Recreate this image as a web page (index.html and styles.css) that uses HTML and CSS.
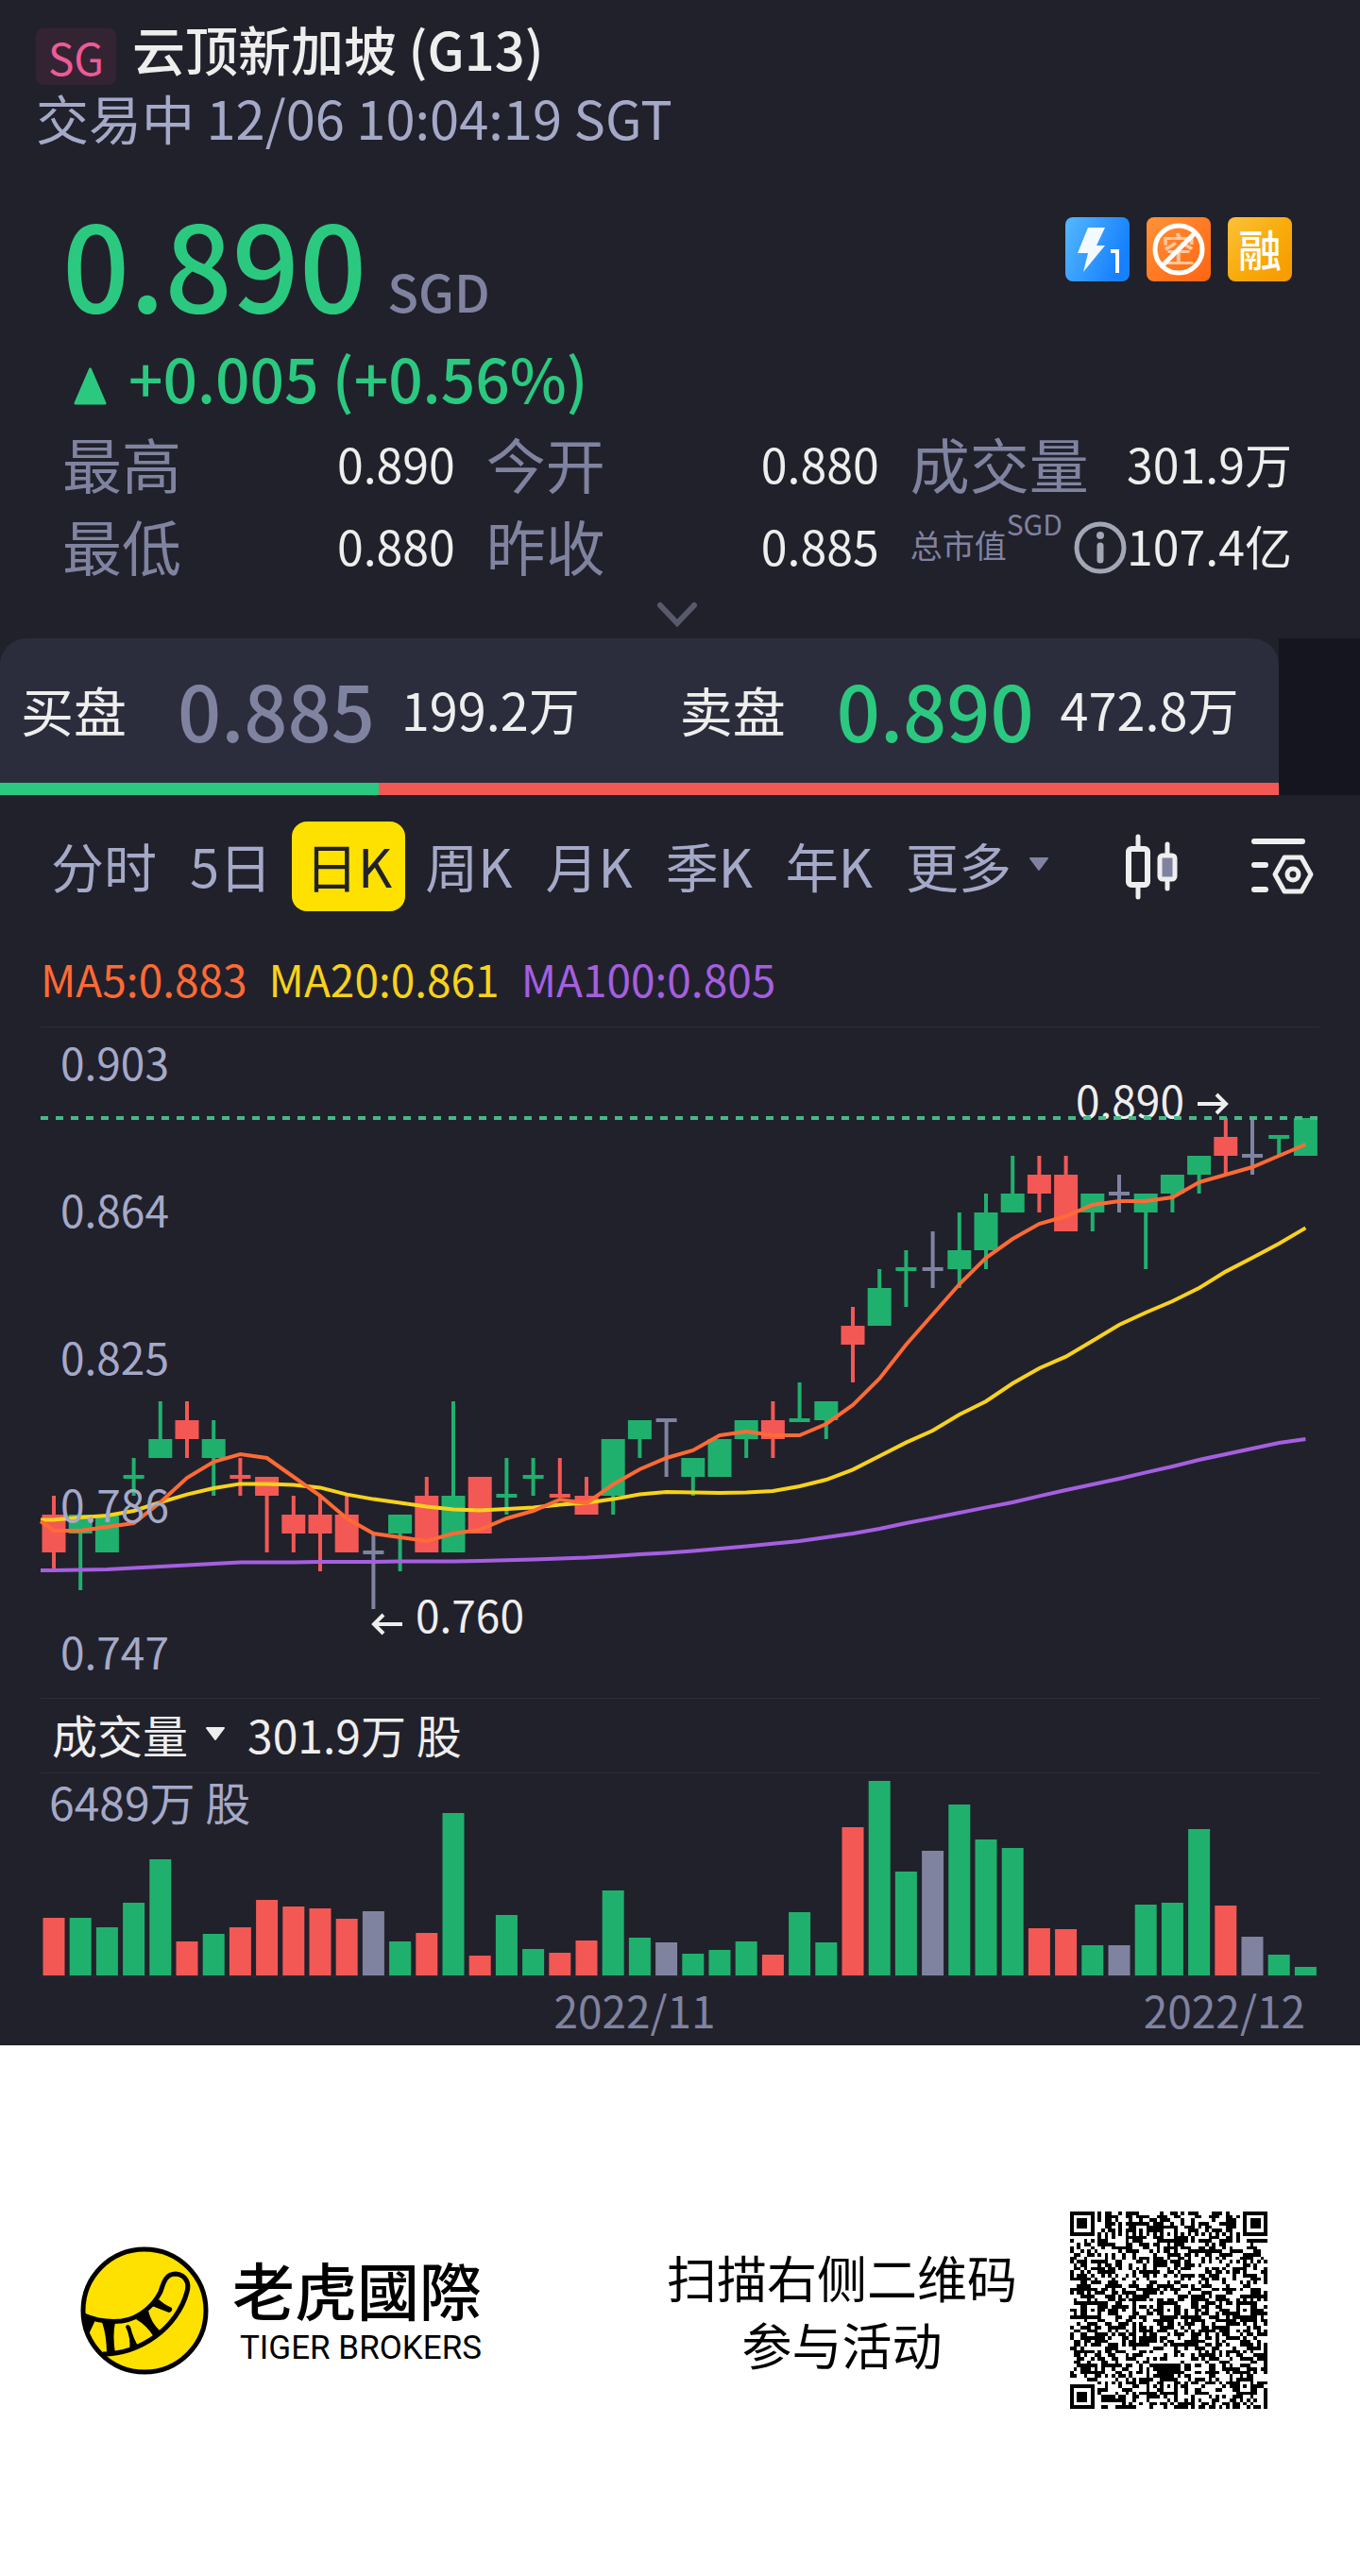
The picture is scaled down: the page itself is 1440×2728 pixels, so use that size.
FILE: index.html
```html
<!DOCTYPE html>
<html lang="zh-CN">
<head>
    <meta charset="UTF-8">
    <meta name="viewport" content="width=device-width, initial-scale=1.0">
    <title>云顶新加坡 (G13)</title>
    <link rel="stylesheet" href="styles.css">
</head>
<body>
    <main class="stock">
        <header class="stock-header">
            <div class="stock-title">
                <span class="market-tag">SG</span>
                <h1>云顶新加坡 (G13)</h1>
            </div>
            <p class="stock-status">交易中 12/06 10:04:19 SGT</p>
        </header>

        <section class="quote">
            <div class="quote-top">
                <div class="quote-price">
                    <span class="price">0.890</span>
                    <span class="currency">SGD</span>
                </div>
                <div class="badges">
                    <svg class="badge" viewBox="0 0 68 68" role="img" aria-label="Level 1">
                        <defs>
                            <linearGradient id="blue" x1="0" y1="0" x2="1" y2="0.4">
                                <stop offset="0" stop-color="#55b8fd"/>
                                <stop offset="1" stop-color="#1680ff"/>
                            </linearGradient>
                        </defs>
                        <rect width="68" height="68" rx="8" fill="url(#blue)"/>
                        <path d="M24 11h18l-9 19h9L19 58l5-20H13z" fill="#f2f9ff"/>
                        <path d="M48 36h7v23" fill="none" stroke="#fff" stroke-width="4"/>
                    </svg>
                    <svg class="badge" viewBox="0 0 68 68" role="img" aria-label="不可卖空">
                        <defs>
                            <linearGradient id="orange" x1="0" y1="0" x2="1" y2="1">
                                <stop offset="0" stop-color="#ff9238"/>
                                <stop offset="1" stop-color="#ff6410"/>
                            </linearGradient>
                        </defs>
                        <rect width="68" height="68" rx="8" fill="url(#orange)"/>
                        <text x="34" y="48" class="badge-faint">空</text>
                        <circle cx="34" cy="34" r="25" fill="none" stroke="#fff" stroke-width="5"/>
                        <path d="M17 51L51 17" stroke="#fff" stroke-width="5"/>
                    </svg>
                    <svg class="badge" viewBox="0 0 68 68" role="img" aria-label="融资">
                        <defs>
                            <linearGradient id="gold" x1="0" y1="0" x2="1" y2="1">
                                <stop offset="0" stop-color="#fcc13c"/>
                                <stop offset="0.5" stop-color="#f9ac0c"/>
                                <stop offset="1" stop-color="#f79800"/>
                            </linearGradient>
                        </defs>
                        <rect width="68" height="68" rx="8" fill="url(#gold)"/>
                        <text x="34" y="52" class="badge-text">融</text>
                    </svg>
                </div>
            </div>
            <p class="change">
                <svg width="35" height="40" viewBox="0 0 35 40" aria-hidden="true">
                    <path d="M17.5 2L33 38H2z" fill="#2bc980" stroke="#2bc980" stroke-width="3" stroke-linejoin="round"/>
                </svg>
                <span>+0.005 (+0.56%)</span>
            </p>

            <dl class="stats">
                <div><dt>最高</dt><dd>0.890</dd></div>
                <div><dt>今开</dt><dd>0.880</dd></div>
                <div><dt>成交量</dt><dd>301.9万</dd></div>
                <div><dt>最低</dt><dd>0.880</dd></div>
                <div><dt>昨收</dt><dd>0.885</dd></div>
                <div>
                    <dt class="cap-label">总市值<sup>SGD</sup></dt>
                    <dd class="cap-value">
                        <svg width="56" height="56" viewBox="0 0 56 56" aria-hidden="true">
                            <circle cx="28" cy="28" r="25" fill="none" stroke="#a3a6b5" stroke-width="5"/>
                            <circle cx="28" cy="15" r="4" fill="#a3a6b5"/>
                            <path d="M28 26v15" stroke="#a3a6b5" stroke-width="7" stroke-linecap="round"/>
                        </svg>
                        <span>107.4亿</span>
                    </dd>
                </div>
            </dl>

            <button class="expand" aria-label="展开">
                <svg width="44" height="28" viewBox="0 0 44 28">
                    <path d="M4 4l18 19L40 4" fill="none" stroke="#585a6c" stroke-width="6" stroke-linecap="round"/>
                </svg>
            </button>
        </section>

        <section class="order-book">
            <div class="order-panel">
                <div class="orders">
                    <div class="order">
                        <span>买盘</span>
                        <span class="order-price flat">0.885</span>
                        <span class="order-size">199.2万</span>
                    </div>
                    <div class="order">
                        <span>卖盘</span>
                        <span class="order-price up">0.890</span>
                        <span class="order-size">472.8万</span>
                    </div>
                </div>
                <div class="ratio">
                    <div class="ratio-bid" style="width: 29.6%"></div>
                </div>
            </div>
        </section>

        <nav class="tabs">
            <button>分时</button>
            <button>5日</button>
            <button class="active">日K</button>
            <button>周K</button>
            <button>月K</button>
            <button>季K</button>
            <button>年K</button>
            <button class="more">更多
                <svg width="22" height="17" viewBox="0 0 22 17" aria-hidden="true">
                    <path d="M2 2h18l-9 12z" fill="#8083a0" stroke="#8083a0" stroke-width="2" stroke-linejoin="round"/>
                </svg>
            </button>
            <div class="tools">
                <button aria-label="K线样式">
                    <svg width="56" height="70" viewBox="0 0 56 70" fill="none" stroke="#eee" stroke-linecap="round">
                        <path d="M13 3v12M13 56v11M44 11v10M44 50v8" stroke-width="5"/>
                        <rect x="3" y="16" width="20" height="38" rx="3" stroke-width="6"/>
                        <rect x="36" y="23" width="16" height="25" rx="3" fill="#8083a0" stroke-width="5"/>
                    </svg>
                </button>
                <button aria-label="指标设置">
                    <svg width="68" height="62" viewBox="0 0 68 62" fill="none" stroke="#eee" stroke-linecap="round" stroke-linejoin="round">
                        <path d="M4 4h51M4 29h12M4 55h12" stroke-width="6"/>
                        <path d="M36 21h18l10 18-10 18H36L26 39z" stroke-width="5"/>
                        <circle cx="45" cy="39" r="6" stroke-width="5"/>
                    </svg>
                </button>
            </div>
        </nav>

        <div class="averages">
            <span class="ma5">MA5:0.883</span>
            <span class="ma20">MA20:0.861</span>
            <span class="ma100">MA100:0.805</span>
        </div>

        <section class="charts">
            <svg id="candles" viewBox="43 0 1354 710"></svg>
            <div class="volume-bar">
                <button class="volume-select">成交量
                    <svg width="22" height="17" viewBox="0 0 22 17" aria-hidden="true">
                        <path d="M2 2h18l-9 12z" fill="#eee" stroke="#eee" stroke-width="2" stroke-linejoin="round"/>
                    </svg>
                </button>
                <span>301.9万 股</span>
            </div>
            <svg id="volume" viewBox="43 0 1354 288"></svg>
        </section>
    </main>

    <footer class="share">
        <div class="brand">
            <svg width="136" height="136" viewBox="0 0 136 136" role="img" aria-label="老虎國際">
                <circle cx="68" cy="68" r="65" fill="#ffe100" stroke="#000" stroke-width="5"/>
                <path d="M4 73C20 80 33 80 44 79C65 76 79 60 85 48C88 39 90 29 101 29C111 30 116 38 113 48C108 67 95 84 80 95C62 108 42 114 24 114" fill="none" stroke="#000" stroke-width="5"/>
                <path d="M4 72l12 6-8 17-4-8zM23 80h14q-3 15 0 33H28q0-18-5-33zM48 85q2-4 5 0 3 12 9 22l-10 4q2-14-4-26zM59 77l13-9q3 13 13 22l-7 6q-7-12-19-19zM76 63l7-7q5 5 14 9 1 4-3 5-8-3-18-7z" fill="#000"/>
            </svg>
            <div class="brand-name">
                <strong>老虎國際</strong>
                <span>TIGER BROKERS</span>
            </div>
        </div>
        <div class="invite">
            <p>扫描右侧二维码<br>参与活动</p>
            <svg id="qr" width="209" height="209" viewBox="0 0 57 57" role="img" aria-label="二维码"></svg>
        </div>
    </footer>

    <script src="chart.js"></script>
</body>
</html>
```
FILE: styles.css
```css
* {
    box-sizing: border-box;
}

body {
    margin: 0;
    background: #fff;
    color: #eee;
    font-family: "Noto Sans CJK SC", "Noto Sans", sans-serif;
}

h1, p, dl, dd {
    margin: 0;
}

h1 {
    font-weight: 500;
}

button {
    padding: 0;
    border: none;
    background: none;
    color: inherit;
    font: inherit;
    cursor: pointer;
}

svg {
    display: block;
    overflow: visible;
}

.stock {
    background: #21212b;
}

/* Header */
.stock-header {
    padding: 18px 38px 0;
}

.stock-title {
    display: flex;
    align-items: flex-end;
    gap: 17px;
}

.stock-title h1 {
    padding-bottom: 6px;
    font-size: 56px;
    line-height: 66px;
}

.market-tag {
    width: 85px;
    border-radius: 8px;
    background: #342433;
    color: #ee5b97;
    font-size: 46px;
    line-height: 60px;
    text-align: center;
}

.stock-status {
    color: #a5a9c8;
    font-size: 56px;
    line-height: 68px;
}

/* Quote */
.quote {
    padding: 59px 72px 0 66px;
}

.quote-top {
    display: flex;
    justify-content: space-between;
}

.quote-price {
    display: flex;
    align-items: baseline;
    gap: 22px;
    font-weight: 500;
}

.price {
    color: #2bc980;
    font-size: 125px;
    line-height: 120px;
}

.currency {
    color: #8083a0;
    font-size: 54px;
    line-height: 54px;
}

.badges {
    display: flex;
    gap: 18px;
    padding-top: 13px;
}

.badge {
    width: 68px;
    height: 68px;
}

.badge-text, .badge-faint {
    fill: #fff;
    font-size: 46px;
    font-weight: 500;
    text-anchor: middle;
}

.badge-faint {
    fill: #ffc79c;
    font-size: 36px;
}

.change {
    display: flex;
    align-items: center;
    gap: 23px;
    margin-top: 22px;
    padding-left: 12px;
    color: #2bc980;
    font-size: 64px;
    font-weight: 500;
    line-height: 80px;
}

.change svg {
    margin-top: 20px;
}

.stats {
    display: grid;
    grid-template-columns: 36fr 36fr 35fr;
    column-gap: 33px;
    margin-top: 7px;
}

.stats > div {
    display: flex;
    justify-content: space-between;
    align-items: center;
    height: 87px;
    white-space: nowrap;
}

.stats dt {
    color: #8083a0;
    font-size: 63px;
}

.stats dd {
    font-size: 50px;
}

.stats .cap-label {
    display: flex;
    align-items: center;
    font-size: 34px;
}

.cap-label sup {
    align-self: flex-start;
    margin-top: -20px;
    font-size: 30px;
}

.stats .cap-value {
    display: flex;
    align-items: center;
}

.cap-value svg {
    margin-top: 6px;
}

.expand {
    display: block;
    height: 56px;
    margin: 0 auto;
    padding-top: 6px;
}

/* Order book */
.order-book {
    padding-right: 6%;
    background: linear-gradient(to right, #21212b 94%, #14151f 94%);
}

.order-panel {
    overflow: hidden;
    border-radius: 28px 28px 0 0;
    background: #2c2d3c;
}

.orders {
    display: flex;
    align-items: center;
    gap: 106px;
    height: 153px;
    padding: 0 22px 4px;
}

.order {
    display: flex;
    align-items: center;
    font-size: 56px;
    white-space: nowrap;
}

.order-price {
    margin: 0 28px 0 54px;
    font-size: 81px;
    font-weight: 500;
    line-height: 100px;
}

.order-size {
    font-size: 54px;
}

.up {
    color: #2bc980;
}

.flat {
    color: #8083a0;
}

.ratio {
    height: 13px;
    background: #f35855;
}

.ratio-bid {
    height: 100%;
    background: #2bc980;
}

/* Tabs */
.tabs {
    display: flex;
    align-items: center;
    gap: 35px;
    padding: 28px 48px 0 54px;
    color: #a5a9c8;
    font-size: 56px;
    white-space: nowrap;
}

.tabs > button {
    padding-bottom: 4px;
    line-height: 91px;
}

.tabs .active {
    margin: 0 -14px;
    padding: 0 14px 4px;
    border-radius: 16px;
    background: #ffe100;
    color: #21212b;
}

.more, .volume-select {
    display: flex;
    align-items: center;
    gap: 18px;
}

.tools {
    display: flex;
    align-items: center;
    gap: 76px;
    margin-left: auto;
}

/* Moving averages */
.averages {
    display: flex;
    gap: 23px;
    padding: 41px 43px 21px;
    font-size: 46px;
    line-height: 60px;
}

.ma5 {
    color: #ff6a35;
}

.ma20 {
    color: #f8d21c;
}

.ma100 {
    color: #a55fe0;
}

/* Charts */
.charts {
    margin: 0 43px;
}

.charts > svg {
    width: 100%;
    border-top: 1px solid #2d2e3a;
}

.volume-bar {
    display: flex;
    align-items: center;
    gap: 23px;
    height: 79px;
    padding: 0 12px 4px;
    border-top: 1px solid #2d2e3a;
    font-size: 48px;
}

.charts text {
    font-size: 46px;
}

.charts .volume-max {
    font-size: 48px;
}

.axis {
    fill: #a5a9c8;
}

.note {
    fill: #eee;
}

.date {
    fill: #8083a0;
}

.arrow {
    fill: none;
    stroke: #eee;
    stroke-width: 4;
}

.last-price {
    stroke: #45b987;
    stroke-width: 4;
    stroke-dasharray: 8 8;
}

.line {
    fill: none;
    stroke-width: 4;
}

.base {
    stroke: #2d2e3a;
}

/* Footer */
.share {
    display: flex;
    justify-content: space-between;
    align-items: center;
    padding: 176px 98px 177px 85px;
    color: #000;
}

.brand {
    display: flex;
    align-items: center;
    gap: 25px;
}

.brand-name {
    display: flex;
    flex-direction: column;
    align-items: flex-end;
}

.brand-name strong {
    font-family: "Noto Sans CJK TC", sans-serif;
    font-size: 66px;
    font-weight: 500;
    line-height: 80px;
}

.brand-name span {
    font-family: Roboto, sans-serif;
    font-size: 35px;
    line-height: 48px;
}

.invite {
    display: flex;
    align-items: center;
    gap: 56px;
}

.invite p {
    font-size: 53px;
    line-height: 71px;
    text-align: center;
}
```
FILE: chart.js
```js
const GREEN = '#20b06e';
const RED = '#f35855';
const GREY = '#8083a0';
const FIRST_X = 57;
const STEP_X = 28.2;

// [color, body top, body bottom, high, low, volume]
// prices are counted in ticks of 0.005 below 0.890
const days = [
    [RED, 21, 23, 20, 24, 61], [GREEN, 21, 22, 21, 25, 61], [GREEN, 21, 23, 21, 23, 51],
    [GREEN, 19, 19, 18, 20, 77], [GREEN, 17, 18, 15, 18, 123], [RED, 16, 17, 15, 18, 36],
    [GREEN, 17, 18, 16, 20, 44], [RED, 19, 19, 18, 20, 51], [RED, 19, 20, 19, 23, 80],
    [RED, 21, 22, 20, 23, 73], [RED, 21, 22, 20, 24, 71], [RED, 21, 23, 20, 23, 60],
    [GREY, 23, 23, 22, 26, 68], [GREEN, 21, 22, 21, 24, 36], [RED, 20, 23, 19, 23, 45],
    [GREEN, 20, 23, 15, 23, 172], [RED, 19, 22, 19, 22, 21], [GREEN, 20, 20, 18, 21, 64],
    [GREEN, 19, 19, 18, 20, 28], [RED, 20, 20, 18, 20, 24], [RED, 20, 21, 19, 21, 37],
    [GREEN, 17, 20, 17, 21, 90], [GREEN, 16, 17, 16, 18, 40], [GREY, 16, 16, 16, 19, 35],
    [GREEN, 18, 19, 18, 20, 23], [GREEN, 17, 19, 17, 19, 27], [GREEN, 16, 17, 16, 18, 36],
    [RED, 16, 17, 15, 18, 22], [GREEN, 16, 16, 14, 16, 67], [GREEN, 15, 16, 15, 17, 35],
    [RED, 11, 12, 10, 14, 157], [GREEN, 9, 11, 8, 11, 206], [GREEN, 8, 8, 7, 10, 110],
    [GREY, 8, 8, 6, 9, 132], [GREEN, 7, 8, 5, 9, 181], [GREEN, 5, 7, 4, 8, 144],
    [GREEN, 4, 5, 2, 5, 135], [RED, 3, 4, 2, 5, 50], [RED, 3, 6, 2, 6, 49],
    [GREEN, 4, 5, 4, 6, 32], [GREY, 4, 4, 3, 5, 32], [GREEN, 4, 5, 4, 8, 75],
    [GREEN, 3, 4, 3, 5, 77], [GREEN, 2, 3, 2, 4, 155], [RED, 1, 2, 0, 3, 74],
    [GREY, 2, 2, 0, 3, 41], [GREEN, 1, 1, 1, 2, 22], [GREEN, 0, 2, 0, 2, 9]
];

const ma5 = [21.85, 21.85, 21.65, 21.45, 20.35, 19.05, 18.2, 17.8, 18, 19, 20, 21.2, 22, 22.2, 22.4, 22,
    21.8, 21.2, 20.8, 20.2, 20.4, 19.4, 18.6, 18, 17.6, 16.8, 16.6, 16.8, 16.8, 16.2, 15.2, 13.8,
    12, 10.4, 8.8, 7.4, 6.4, 5.6, 5.2, 4.6, 4.4, 4.4, 4.2, 3.4, 3, 2.6, 2, 1.4];
const ma20 = [21.28, 21.15, 21.05, 20.8, 20.35, 19.93, 19.6, 19.37, 19.37, 19.42, 19.57, 19.93, 20.18, 20.38, 20.58, 20.73,
    20.78, 20.7, 20.63, 20.48, 20.38, 20.18, 19.93, 19.8, 19.83, 19.85, 19.83, 19.75, 19.5, 19.15, 18.62, 17.9,
    17.18, 16.55, 15.7, 15, 14.05, 13.25, 12.63, 11.8, 10.95, 10.3, 9.7, 9, 8.13, 7.4, 6.65, 5.82];
const ma100 = [23.95, 23.93, 23.9, 23.82, 23.75, 23.68, 23.6, 23.53, 23.53, 23.52, 23.5, 23.5, 23.5, 23.48, 23.48, 23.47,
    23.45, 23.41, 23.37, 23.32, 23.28, 23.2, 23.1, 23.02, 22.92, 22.8, 22.67, 22.54, 22.4, 22.2, 22, 21.75,
    21.45, 21.18, 20.9, 20.62, 20.35, 20.02, 19.7, 19.4, 19.1, 18.77, 18.45, 18.1, 17.8, 17.5, 17.2, 17];

const x = i => FIRST_X + i * STEP_X;
const y = tick => 96 + tick * 20;

function line(values, color, start) {
    const points = values.map((v, i) => `${x(i)},${y(v)}`).join(' ');
    return `<polyline class="line" stroke="${color}" points="43,${y(start)} ${points}"/>`;
}

function drawCandles() {
    let out = '';
    days.forEach(([color, top, bottom, high, low], i) => {
        out += `<rect x="${x(i) - 2}" y="${y(high)}" width="4" height="${y(low) - y(high)}" fill="${color}"/>`;
        if (top === bottom) {
            out += `<rect x="${x(i) - 11}" y="${y(top) - 2}" width="22" height="4" fill="${color}"/>`;
        } else {
            out += `<rect x="${x(i) - 12.5}" y="${y(top)}" width="25" height="${y(bottom) - y(top)}" fill="${color}"/>`;
        }
    });

    out += line(ma100, '#a55fe0', 23.95);
    out += line(ma20, '#f8d21c', 21.28);
    out += line(ma5, '#ff6a35', 21.35);

    ['0.903', '0.864', '0.825', '0.786', '0.747'].forEach((label, i) => {
        out += `<text class="axis" x="64" y="${56 + i * 156}">${label}</text>`;
    });

    out += '<text class="note" x="1139" y="96">0.890</text><path class="arrow" d="M1268 81h30M1288 71l10 10-10 10"/>';
    out += '<text class="note" x="440" y="641">0.760</text><path class="arrow" d="M426 632h-30M406 622l-10 10 10 10"/>';
    out += '<line class="last-price" x1="43" x2="1397" y1="96" y2="96"/>';
    document.getElementById('candles').innerHTML = out;
}

function drawVolume() {
    let out = '<line class="base" x1="43" x2="1397" y1="215" y2="215"/>';
    days.forEach((day, i) => {
        out += `<rect x="${x(i) - 11.5}" y="${214 - day[5]}" width="23" height="${day[5]}" fill="${day[0]}"/>`;
    });
    out += '<text class="axis volume-max" x="52" y="50">6489万 股</text>';
    out += '<text class="date" x="672" y="270" text-anchor="middle">2022/11</text>';
    out += '<text class="date" x="1382" y="270" text-anchor="end">2022/12</text>';
    document.getElementById('volume').innerHTML = out;
}

// square rings used by the finder and alignment marks
function ring(cx, cy, r, col, row) {
    const d = Math.max(Math.abs(col - cx), Math.abs(row - cy));
    return d > r ? null : d;
}

function drawQr() {
    const size = 57;
    let seed = 20221206;
    let path = '';
    for (let row = 0; row < size; row++) {
        for (let col = 0; col < size; col++) {
            seed = (seed * 1103515245 + 12345) % 2147483648;
            let dark = (seed >> 16) % 2 === 0;
            if (row === 6 || col === 6) dark = (row + col) % 2 === 0;
            for (const [cx, cy] of [[28, 6], [6, 28], [28, 28], [50, 28], [28, 50], [50, 50]]) {
                const d = ring(cx, cy, 2, col, row);
                if (d !== null) dark = d !== 1;
            }
            for (const [cx, cy] of [[3, 3], [size - 4, 3], [3, size - 4]]) {
                const d = ring(cx, cy, 4, col, row);
                if (d !== null) dark = d < 2 || d === 3;
            }
            if (dark) path += `M${col} ${row}h1v1h-1z`;
        }
    }
    document.getElementById('qr').innerHTML = `<path d="${path}" shape-rendering="crispEdges"/>`;
}

drawCandles();
drawVolume();
drawQr();
```
